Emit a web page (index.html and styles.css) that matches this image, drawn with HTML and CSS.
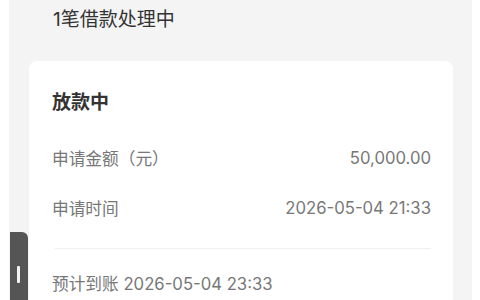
FILE: index.html
```html
<!DOCTYPE html>
<html lang="zh-CN">
<head>
    <meta charset="UTF-8">
    <title>借款处理中</title>
    <link rel="stylesheet" href="styles.css">
</head>
<body>
    <div class="screen">
        <div class="header">
            <h1>1笔借款处理中</h1>
        </div>
        <div class="card">
            <h2>放款中</h2>
            <div class="row">
                <span class="label">申请金额（元）</span>
                <span class="value">50,000.00</span>
            </div>
            <div class="row">
                <span class="label">申请时间</span>
                <span class="value">2026-05-04 21:33</span>
            </div>
            <div class="divider"></div>
            <p class="arrival">预计到账 2026-05-04 23:33</p>
        </div>
    </div>

    <!-- 侧边悬浮按钮 -->
    <div class="side-tab"><span class="grip"></span></div>
</body>
</html>
```

FILE: styles.css
```css
body {
    font-family: Inter, "Noto Sans CJK SC", sans-serif;
    background-color: #ffffff;
    color: #333;
    margin: 0;
    height: 300px;
    overflow: hidden;
}

.screen {
    margin-left: 9px;
    width: 463px;
    height: 300px;
    background-color: #f4f4f4;
    overflow: hidden;
}

.header {
    height: 61px;
    padding-left: 44px;
    box-sizing: border-box;
}

h1 {
    margin: 0;
    padding-top: 7px;
    font-size: 19px;
    line-height: 26px;
    font-weight: 400;
    color: #333;
}

.card {
    margin: 0 19px 0 20px;
    background-color: #ffffff;
    border-radius: 8px;
    padding: 30px 22px 0 23px;
    height: 270px;
    box-sizing: border-box;
}

h2 {
    margin: 0 0 18px;
    font-size: 19px;
    line-height: 24px;
    font-weight: bold;
    color: #333;
}

.row {
    display: flex;
    justify-content: space-between;
    align-items: center;
    height: 50px;
    font-size: 16.7px;
    color: #777;
}

.divider {
    height: 1px;
    background-color: #efefef;
    margin: 15px 0 0 3px;
}

.arrival {
    margin: 0;
    padding-top: 23px;
    font-size: 16.7px;
    line-height: 24px;
    color: #777;
}

/* 侧边按钮 */
.side-tab {
    position: absolute;
    left: 10px;
    top: 232px;
    width: 18px;
    height: 68px;
    background-color: #555;
    border-top-right-radius: 6px;
}

.grip {
    position: absolute;
    left: 7px;
    top: 34px;
    width: 3px;
    height: 17px;
    background-color: #f2f2f2;
    border-radius: 1px;
}
```
